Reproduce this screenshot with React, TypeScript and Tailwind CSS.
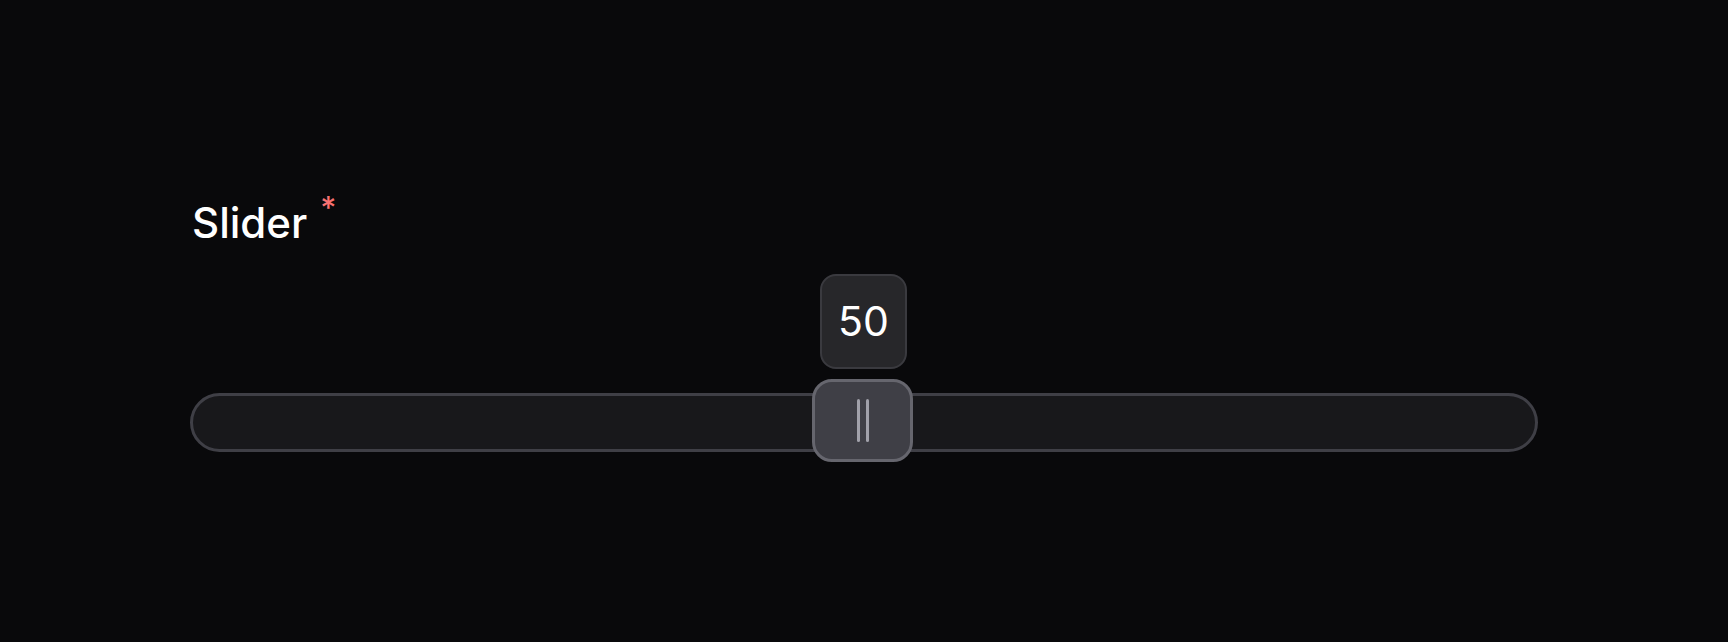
import React from "react";

export default function App() {
  return (
    <div className="min-h-[642px] w-full bg-[#09090b] px-[190px] pt-[202px]" style={{ fontFamily: "Inter, 'Noto Sans', sans-serif" }}>
      <div className="pl-[2px] text-[42px] font-medium leading-[41px] text-white">
        Slider
        <span className="relative -top-[10px] ml-[13px] align-top text-[31px] leading-none text-[#f87171]">*</span>
      </div>
      <div className="relative mt-[150px] h-[59px] w-full rounded-full border-[3px] border-[#3f3f46] bg-[#18181b]">
        <div className="absolute left-1/2 top-[-122px] -ml-[44px] flex h-[95px] w-[87px] items-center justify-center rounded-[16px] border-2 border-[#3a3a3f] bg-[#27272a] text-[41px] text-white">
          50
        </div>
        <div className="absolute left-1/2 top-[-17px] -ml-[52px] flex h-[83px] w-[101px] items-center justify-center gap-[6px] rounded-[20px] border-[3px] border-[#66666e] bg-[#3f3f46]">
          <div className="h-[43px] w-[3px] rounded-full bg-[#a1a1aa]" />
          <div className="h-[43px] w-[3px] rounded-full bg-[#a1a1aa]" />
        </div>
      </div>
    </div>
  );
}
